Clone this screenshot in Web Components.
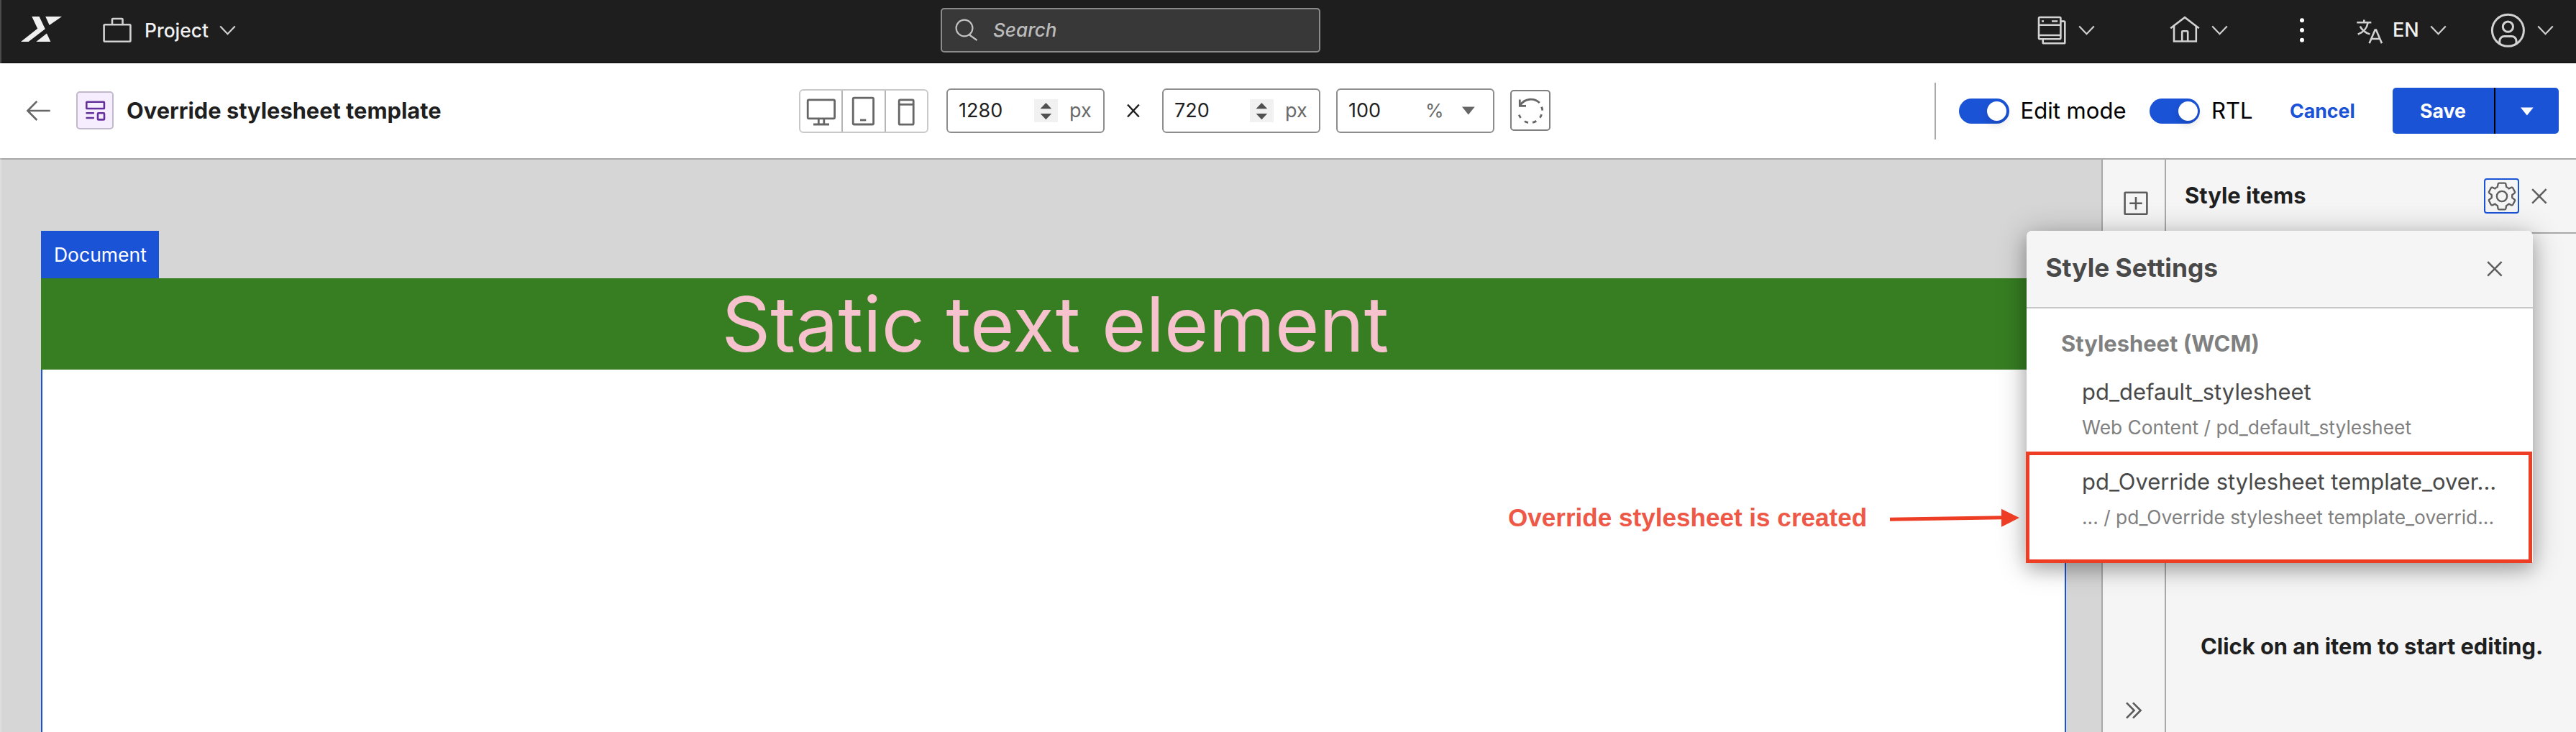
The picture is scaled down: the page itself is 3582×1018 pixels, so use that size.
<!DOCTYPE html>
<html lang="en">
<head>
<meta charset="utf-8">
<title>Override stylesheet template</title>
<style>
html,body{margin:0;height:100%;overflow:hidden;background:#fff}
body{font-family:Inter,"Liberation Sans",sans-serif}
</style>
</head>
<body>
<studio-app></studio-app>
<script>
const define = (name, css, html) => {
  customElements.define(name, class extends HTMLElement {
    connectedCallback() {
      if (this.shadowRoot) return;
      const t = document.createElement('template');
      t.innerHTML = `<style>*{box-sizing:border-box}${css}</style>${html}`;
      this.attachShadow({ mode: 'open' }).append(t.content.cloneNode(true));
    }
  });
};

/* Icons: [viewBox, markup]. Strokes take currentColor and the --stroke width. */
const ICONS = {
  logo: ['29 22 57 40', '<g fill="#f0f0f0" stroke="none"><path d="M44.3 23H54.6L62.8 40.3 39.6 58H29L52.2 39.8z"/><path d="M63.2 23H86L68.7 35z"/><path d="M50.3 58L65 46.6 70.4 58z"/></g>'],
  briefcase: ['143 22 40 40', '<rect x="144.6" y="34.2" width="36.8" height="23.6" rx="1.2"/><path d="M156 34v-7a1 1 0 0 1 1-1h12.5a1 1 0 0 1 1 1v7"/>'],
  chevron: ['0 0 23 40', '<path d="M1.2 14.6L11.5 25.2 21.8 14.6"/>'],
  search: ['0 0 32 40', '<circle cx="13" cy="17" r="11.4"/><path d="M20 26.5L30.5 34"/>'],
  pages: ['0 22 40 40', '<rect x="2" y="24" width="30.4" height="30.3" rx="1.5"/><path d="M2 34.8h30.4M2 49h30.4M32.4 29.6H37a1.3 1.3 0 0 1 1.3 1.3V59a1.3 1.3 0 0 1-1.3 1.3H9A1.3 1.3 0 0 1 7.7 59V54.3M6 29.5h3M20 29.5h8.2"/>'],
  home: ['0 22 42 40', '<path d="M1.2 39.3L21 24.2 40.8 39.3"/><path d="M6 36V57.5H36.8V36"/><path d="M17.2 57.5V44.3a1 1 0 0 1 1-1h6a1 1 0 0 1 1 1V57.5"/>'],
  more: ['0 22 6 40', '<g fill="#fff" stroke="none"><circle cx="3" cy="28.3" r="3"/><circle cx="3" cy="42" r="3"/><circle cx="3" cy="55.7" r="3"/></g>'],
  language: ['0 22 36 40', '<path d="M.3 31.3h20M10.3 27.6v3.7M15.6 31.6C14.4 39 10 44.6 1.7 47.6M4.8 36.6C7.5 42 12 45.5 18.3 47.6M17.6 60.2L25.6 41.6h1.4L35 60.2M20.7 54h11.2"/>'],
  user: ['0 18 47 48', '<circle cx="23.4" cy="42.3" r="22"/><circle cx="23.4" cy="37.2" r="7.1"/><path d="M11.8 60.8V57a6.5 6.5 0 0 1 6.5-6.5h10.2a6.5 6.5 0 0 1 6.5 6.5V60.8"/>'],
  back: ['37 134 33 40', '<path d="M69.7 154H38.6M51.3 140.8L38.4 154 51.3 167"/>'],
  layout: ['118 139.5 27 28', '<rect x="119.3" y="141.3" width="24.6" height="9.2" rx=".6"/><path d="M118.5 156.800h11.4M118.5 163.5h11.4"/><rect x="135" y="156.7" width="9" height="9.2" rx="1"/>'],
  monitor: ['0 0 40 38', '<rect x="1.2" y="1.8" width="37.4" height="26" rx="1.5"/><path d="M16.3 28v8M23.8 28v8M9 36h22"/>'],
  tablet: ['0 0 31 40', '<rect x="1.2" y="1.2" width="28.4" height="36.8" rx="1.5"/><path d="M11 32h8.3"/>'],
  phone: ['0 0 23 38', '<rect x="1.2" y="1.8" width="20" height="34.4" rx="1.5"/><path d="M1.2 8.3h20"/>'],
  times: ['0 0 18 20', '<path d="M1 1.5L16.8 18.5M16.8 1.5L1 18.5"/>'],
  caret: ['0 0 18 12', '<path d="M0 .5h17.7L8.85 11.5z" fill="currentColor" stroke="none"/>'],
  steps: ['0 0 33 32', '<g fill="currentColor" stroke="none"><path d="M8.6 13.2L16.4 5l7.8 8.2z"/><path d="M8.6 20l7.8 8.2L24.2 20z"/></g>'],
  revert: ['10 10 36 38', '<path d="M13.3 13.5V22.4H22"/><path d="M14.2 21A17.3 17.3 0 0 1 40.8 18.1"/><path d="M43.6 23.6A16.8 16.8 0 0 1 44.8 28.7M43.5 34.2A16.8 16.8 0 0 1 41.4 38.8M36.3 43.3A16.8 16.8 0 0 1 31 45.4M25 45.6A16.8 16.8 0 0 1 19.9 43.6M14.6 39A16.8 16.8 0 0 1 12.3 34.6"/>'],
  add: ['0 0 34 34', '<rect x="1.6" y="1.8" width="30.8" height="30" rx=".8"/><path d="M17 8v17.5M8.3 16.8h17.4"/>'],
  gear: ['-20 -20 40 40', '<g transform="scale(.3333)" style="stroke-width:7"><circle r="21.5"/><path d="M-12 -55H12Q15 -55 16 -52L18.5 -39Q24 -37 29 -32L40 -37Q43.5 -38 45.5 -35L54 -19Q55 -16 53 -14L43 -6Q42 0 43 6L53 14Q55 16 54 19L45.5 35Q43.5 38 40 37L29 32Q24 37 18.5 39L16 52Q15 55 12 55H-12Q-15 55 -16 52L-18.5 39Q-24 37 -29 32L-40 37Q-43.5 38 -45.5 35L-54 19Q-55 16 -53 14L-43 6Q-42 0 -43 -6L-53 -14Q-55 -16 -54 -19L-45.5 -35Q-43.5 -38 -40 -37L-29 -32Q-24 -37 -18.5 -39L-16 -52Q-15 -55 -12 -55z"/></g>'],
  close: ['0 0 22 22', '<path d="M1.2 1.2L20.6 20.6M20.6 1.2L1.2 20.6"/>'],
  expand: ['0 0 22 24', '<path d="M1 1.3L11.6 12 1 22.7M10 1.3L20.6 12 10 22.7"/>'],
  arrow: ['0 0 180 28', '<path d="M0 16.2L158 13.8" style="stroke-width:5"/><path d="M155 1.8V26.8L180 14z" fill="currentColor" stroke="none"/>']
};

customElements.define('ui-icon', class extends HTMLElement {
  connectedCallback() {
    if (this.shadowRoot) return;
    const [vb, body] = ICONS[this.getAttribute('name')];
    const [, , w, h] = vb.split(' ');
    this.attachShadow({ mode: 'open' }).innerHTML =
      `<style>:host{display:block;flex:none;width:${w}px;height:${h}px}svg{display:block;overflow:visible;stroke-width:var(--stroke,2.2)}</style>
       <svg width="${w}" height="${h}" viewBox="${vb}" fill="none" stroke="currentColor">${body}</svg>`;
  }
});

define('top-bar', `
:host{display:flex;align-items:center;height:88px;background:#1e1e1e;border-bottom:2px solid #161616;padding:0 31px 2px 29px;box-sizing:border-box;color:#d2d2d2}
.menu{display:flex;align-items:center}
.label{font-size:26.4px;font-weight:500;line-height:32px;padding-bottom:1px;color:#f1f1f1;white-space:nowrap}
.search{display:flex;align-items:center;width:528px;height:62px;background:#383838;border:2px solid #8b8b8b;border-radius:5px;padding-left:18px;margin-left:980px;color:#c2c2c2}
.search .label{font-style:italic;font-size:26.1px;color:#bcbcbc;margin-left:21px}
.bold{--stroke:2.6}`, `
<ui-icon name="logo"></ui-icon>
<div class="menu" style="margin-left:57px"><ui-icon class="bold" name="briefcase"></ui-icon><span class="label" style="width:104px;margin-left:18px">Project</span><ui-icon name="chevron"></ui-icon></div>
<div class="search"><ui-icon name="search"></ui-icon><span class="label">Search</span></div>
<div class="menu" style="margin-left:auto;gap:17px"><ui-icon class="bold" name="pages"></ui-icon><ui-icon name="chevron"></ui-icon></div>
<div class="menu" style="margin-left:104px;gap:16px"><ui-icon class="bold" name="home"></ui-icon><ui-icon name="chevron"></ui-icon></div>
<ui-icon name="more" style="margin-left:100px"></ui-icon>
<div class="menu" style="margin-left:73px"><ui-icon class="bold" name="language"></ui-icon><span class="label" style="width:52px;margin-left:14px;font-size:27px">EN</span><ui-icon name="chevron"></ui-icon></div>
<div class="menu" style="margin-left:62px;gap:17px"><ui-icon name="user" style="--stroke:3"></ui-icon><ui-icon name="chevron"></ui-icon></div>`);

define('device-switch', `
:host{display:flex;flex:none;width:180px;height:61px;border:2px solid #c9c9c9;border-radius:6px;color:#666;--stroke:2.8}
div{flex:1;display:flex;align-items:center;justify-content:center;padding-top:3px}
div+div{border-left:2px solid #b5b5b5}
div:nth-of-type(2){padding-top:1px}`, `
<div><ui-icon name="monitor"></ui-icon></div><div><ui-icon name="tablet"></ui-icon></div><div><ui-icon name="phone"></ui-icon></div>`);

define('size-field', `
:host{display:flex;flex:none;align-items:center;width:220px;height:62px;border:2px solid #8d8d8d;border-radius:6px;background:#fff;font-size:27px;line-height:32px;color:#1f1f1f;padding-left:15px}
.value{width:105px}
.steps{background:#f1f1f1;color:#505050}
.unit{margin-left:16px;color:#6a6a6a}`, `
<span class="value"><slot></slot></span><ui-icon class="steps" name="steps"></ui-icon><span class="unit">px</span>`);

define('zoom-field', `
:host{display:flex;flex:none;align-items:center;width:220px;height:62px;border:2px solid #8d8d8d;border-radius:6px;background:#fff;font-size:27px;line-height:32px;color:#1f1f1f;padding-left:15px}
.value{width:107px}
.unit{width:51px;font-size:26px;color:#6a6a6a}
ui-icon{color:#666}`, `
<span class="value"><slot></slot></span><span class="unit">%</span><ui-icon name="caret"></ui-icon>`);

define('toggle-switch', `
:host{display:flex;align-items:center;flex:none;white-space:nowrap;color:#000;font-size:31.05px;line-height:38px}
.track{display:flex;justify-content:flex-end;align-items:center;width:70px;height:35px;border-radius:18px;background:#1b53d7;padding-right:3.5px;margin-right:16px}
.knob{width:27px;height:27px;border-radius:50%;background:#fff;box-shadow:0 6px 12px rgba(0,0,0,.13)}`, `
<div class="track"><div class="knob"></div></div><slot></slot>`);

define('save-button', `
:host{display:flex;flex:none;width:231px;height:64px;border-radius:5px;overflow:hidden;background:#1b53d7;color:#fff;font-size:26.7px;font-weight:700;line-height:32px}
.main{width:141px;display:flex;align-items:center;padding-left:38px}
.more{flex:1;border-left:2px solid #000;display:flex;align-items:center;padding:2px 0 0 35px}`, `
<div class="main"><slot></slot></div><div class="more"><ui-icon name="caret"></ui-icon></div>`);

define('editor-toolbar', `
:host{display:flex;align-items:center;height:134px;border-bottom:2px solid #a9a9a9;background:#fff;padding:0 24px 0 37px;box-sizing:border-box;color:#666;white-space:nowrap}
.tile{display:flex;align-items:center;justify-content:center;width:52px;height:53px;border:2px solid #c3b9cd;border-radius:5px;background:#f6edff;color:#65309b;margin:-1px 0 0 36px;--stroke:2.6}
.title{font-size:30.8px;font-weight:700;line-height:38px;color:#1f1f1f;width:935px;margin-left:18px}
.revert{display:flex;align-items:center;justify-content:center;width:56px;height:57px;border:2px solid #808080;border-radius:5px;margin:-1px 0 0 22px;--stroke:2.8}
.rule{width:2px;height:79px;background:#a9a9a9;margin-left:auto;margin-right:31.5px}
.cancel{font-size:26.7px;font-weight:700;line-height:32px;color:#1b53d7;width:143px}`, `
<ui-icon name="back" style="--stroke:2.6"></ui-icon>
<div class="tile"><ui-icon name="layout"></ui-icon></div>
<div class="title">Override stylesheet template</div>
<device-switch></device-switch>
<size-field style="margin-left:25px">1280</size-field>
<ui-icon name="times" style="margin:0 31px;color:#1f1f1f;--stroke:2.5"></ui-icon>
<size-field>720</size-field>
<zoom-field style="margin-left:22px">100</zoom-field>
<div class="revert"><ui-icon name="revert"></ui-icon></div>
<div class="rule"></div>
<toggle-switch style="width:265.5px">Edit mode</toggle-switch>
<toggle-switch style="width:195px">RTL</toggle-switch>
<span class="cancel">Cancel</span>
<save-button>Save</save-button>`);

define('document-canvas', `
:host{display:flex;flex-direction:column;flex:none;width:2922px;background:#d6d6d6;padding:99px 49px 0 57px;box-sizing:border-box}
.tag{display:flex;align-items:center;width:164px;height:66px;background:#1b53d7;color:#fff;font-size:26.5px;line-height:32px;padding:0 0 1px 18px;flex:none}
.text{flex:none;display:flex;justify-content:center;height:127px;background:#377e22;color:#f6c2cd;font-size:105.5px;line-height:127px;white-space:nowrap;padding-left:5px}
.page{flex:1;background:#fff;border:solid #1b53d7;border-width:0 2px}`, `
<div class="tag">Document</div><div class="text"><slot></slot></div><div class="page"></div>`);

define('side-rail', `
:host{display:flex;flex-direction:column;justify-content:space-between;flex:none;width:88px;border-left:2px solid #a9a9a9;background:#f5f5f5;padding:44px 0 18px 29px;box-sizing:border-box;color:#5c5c5c;--stroke:2.6}`, `
<ui-icon name="add"></ui-icon><ui-icon name="expand" style="margin-left:3px"></ui-icon>`);

define('style-panel', `
:host{display:block;flex:1;border-left:2px solid #a9a9a9;background:#f5f5f5;color:#1f1f1f;font-size:30.95px;font-weight:700;line-height:38px;white-space:nowrap}
.head{display:flex;align-items:center;height:103px;border-bottom:2px solid #a9a9a9;padding:0 40px 0 26px}
.head span{flex:1;padding-bottom:2px}
.gear{display:flex;align-items:center;justify-content:center;width:49px;height:49px;border:2px solid #1b53d7;border-radius:4px;color:#5e5e5e;margin-right:17px}
ui-icon{color:#5e5e5e;--stroke:2.5}
.empty{padding:555px 0 0 48px;font-size:30.85px}`, `
<div class="head"><span>Style items</span><div class="gear"><ui-icon name="gear"></ui-icon></div><ui-icon name="close"></ui-icon></div>
<div class="empty">Click on an item to start editing.</div>`);

define('sheet-item', `
:host{display:block;white-space:nowrap;line-height:40px}
.name{font-size:30.95px;color:#494949}
.path{font-size:26.37px;color:#808080;margin-top:9px}`, `
<div class="name"><slot name="name"></slot></div><div class="path"><slot></slot></div>`);

define('settings-dialog', `
:host{display:block;position:absolute;left:2818px;top:321px;width:704px;height:461px;border-radius:8px 8px 0 0;background:#fff;box-shadow:0 10px 24px rgba(0,0,0,.22),0 4px 44px rgba(0,0,0,.24)}
.head{display:flex;align-items:center;justify-content:space-between;height:108px;background:#f5f5f5;border-bottom:2px solid #c9c9c9;border-radius:8px 8px 0 0;padding:0 42px 0 26.5px;color:#5e5e5e;--stroke:2.5}
h2{margin:0;font-size:35.3px;font-weight:700;line-height:44px;padding-bottom:2px;color:#494949}
h3{margin:29px 0 27px 48px;font-size:30.9px;font-weight:700;line-height:40px;color:#808080}
sheet-item{margin-left:77px}
sheet-item+sheet-item{margin-top:36px}`, `
<div class="head"><h2>Style Settings</h2><ui-icon name="close"></ui-icon></div>
<h3>Stylesheet (WCM)</h3>
<sheet-item><span slot="name">pd_default_stylesheet</span>Web Content / pd_default_stylesheet</sheet-item>
<sheet-item><span slot="name">pd_Override stylesheet template_over...</span>... / pd_Override stylesheet template_overrid...</sheet-item>`);

define('call-out', `
:host{display:flex;align-items:center;position:absolute;left:2097px;top:628px;height:155px;color:#ed3d24}
.note{width:531px;font:bold 35.08px/40px "Liberation Sans",sans-serif;color:#ee5847;white-space:nowrap;padding-top:28px}
ui-icon{margin-top:28px}
.frame{width:704px;height:155px;border:5px solid #ed3d24;margin-left:9px}`, `
<div class="note"><slot></slot></div><ui-icon name="arrow"></ui-icon><div class="frame"></div>`);

define('studio-app', `
:host{display:flex;flex-direction:column;position:relative;width:3582px;height:1018px;overflow:hidden}
main{display:flex;flex:1;min-height:0}
.edge{position:absolute;left:0;top:0;width:2px;height:100%;background:rgba(255,255,255,.2)}`, `
<top-bar></top-bar>
<editor-toolbar></editor-toolbar>
<main><document-canvas>Static text element</document-canvas><side-rail></side-rail><style-panel></style-panel></main>
<settings-dialog></settings-dialog>
<call-out>Override stylesheet is created</call-out>
<div class="edge"></div>`);
</script>
</body>
</html>
